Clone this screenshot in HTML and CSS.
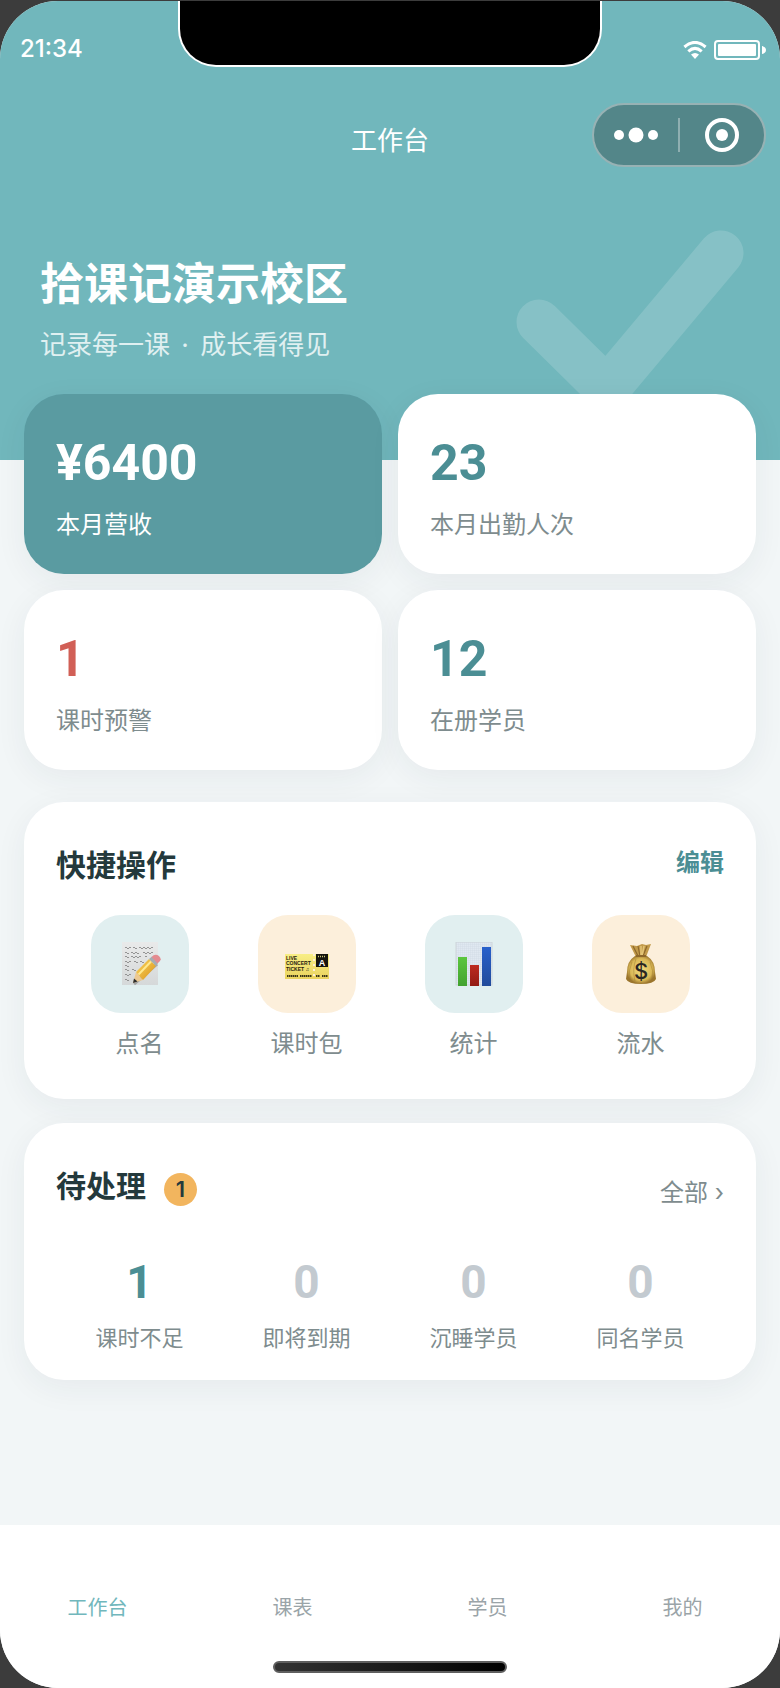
FILE: index.html
```
<!DOCTYPE html>
<html lang="zh-CN">
<head>
    <meta charset="UTF-8">
    <meta name="viewport" content="width=device-width, initial-scale=1.0">
    <title>工作台</title>
    <link rel="stylesheet" href="styles.css">
</head>
<body>
    <div class="screen">
        <header class="hero">
            <svg class="hero-check" viewBox="0 0 240 240" aria-hidden="true">
                <path d="M39 102 L107 169 L221 33" fill="none" stroke="#fff" stroke-opacity="0.15" stroke-width="45" stroke-linecap="round" stroke-linejoin="round"/>
            </svg>

            <div class="status-bar">
                <span class="time">21:34</span>
                <div class="notch"></div>
                <div class="status-icons">
                    <svg width="24" height="18" viewBox="0 0 24 18" aria-hidden="true">
                        <path d="M1.4 6 Q12 -3.2 22.6 6" fill="none" stroke="#fff" stroke-width="3"/>
                        <path d="M5.3 10.4 Q12 4.4 18.7 10.4" fill="none" stroke="#fff" stroke-width="3"/>
                        <path d="M8 13.6 Q12 10.4 16 13.6 L12 18 Z" fill="#fff"/>
                    </svg>
                    <svg width="52" height="20" viewBox="0 0 52 20" aria-hidden="true">
                        <rect x="1" y="1" width="44" height="18" rx="3" fill="none" stroke="#fff" stroke-width="2"/>
                        <rect x="4" y="4" width="38" height="12" rx="1" fill="#fff"/>
                        <path d="M48 6 Q52 7 52 10 Q52 13 48 14 Z" fill="#fff"/>
                    </svg>
                </div>
            </div>

            <div class="nav-bar">
                <div class="nav-title">工作台</div>
                <div class="capsule">
                    <button type="button" aria-label="更多">
                        <svg width="44" height="16" viewBox="0 0 44 16">
                            <circle cx="5" cy="8" r="5" fill="#fff"/>
                            <circle cx="22" cy="8" r="7.5" fill="#fff"/>
                            <circle cx="39" cy="8" r="5" fill="#fff"/>
                        </svg>
                    </button>
                    <button type="button" aria-label="关闭">
                        <svg width="34" height="34" viewBox="0 0 34 34">
                            <circle cx="17" cy="17" r="15" fill="none" stroke="#fff" stroke-width="4"/>
                            <circle cx="17" cy="17" r="6" fill="#fff"/>
                        </svg>
                    </button>
                </div>
            </div>

            <div class="hero-text">
                <h1>拾课记演示校区</h1>
                <p>记录每一课 <span class="dot">·</span> 成长看得见</p>
            </div>
        </header>

        <main>
            <!-- 数据概览 -->
            <section class="stats">
                <div class="stat primary">
                    <div class="number">¥6400</div>
                    <div class="label">本月营收</div>
                </div>
                <div class="stat">
                    <div class="number">23</div>
                    <div class="label">本月出勤人次</div>
                </div>
                <div class="stat warn">
                    <div class="number">1</div>
                    <div class="label">课时预警</div>
                </div>
                <div class="stat">
                    <div class="number">12</div>
                    <div class="label">在册学员</div>
                </div>
            </section>

            <!-- 快捷操作 -->
            <section class="card quick">
                <div class="card-head">
                    <h2>快捷操作</h2>
                    <button type="button" class="edit">编辑</button>
                </div>
                <div class="actions">
                    <button type="button" class="action">
                        <span class="icon teal">
                            <svg width="44" height="44" viewBox="0 0 44 44">
                                <defs>
                                    <linearGradient id="paper" x1="0" y1="0" x2="0" y2="1">
                                        <stop offset="0" stop-color="#e9eaea"/>
                                        <stop offset="1" stop-color="#d5d8d9"/>
                                    </linearGradient>
                                    <linearGradient id="pencil" x1="0" y1="0" x2="1" y2="1">
                                        <stop offset="0" stop-color="#fbd75c"/>
                                        <stop offset="1" stop-color="#d9921c"/>
                                    </linearGradient>
                                </defs>
                                <rect x="4" width="36" height="43" fill="url(#paper)"/>
                                <g fill="none" stroke="#8a8a8a" stroke-width="0.9">
                                    <path d="M7 6 q1 -2 2 0 t2 0 t2 0 M15 6 q1 -2 2 0 t2 0 M21 6 q1 -2 2 0 t2 0 t2 0 t2 0 t2 0 t2 0 t2 0"/>
                                    <path d="M7 11 q1 -2 2 0 t2 0 M13 11 q1 -2 2 0 t2 0 t2 0 t2 0 M25 11 q1 -2 2 0 t2 0 t2 0 t2 0 t2 0"/>
                                    <path d="M7 15 q1 -2 2 0 t2 0 M13 15 q1 -2 2 0 t2 0 t2 0 t2 0 t2 0 M27 15 q1 -2 2 0"/>
                                    <path d="M7 20 q1 -2 2 0 t2 0 t2 0 M16 20 q1 -2 2 0 t2 0 M22 20 q1 -2 2 0 t2 0"/>
                                    <path d="M7 24 q1 -2 2 0 t2 0 M7 28 q1 -2 2 0 t2 0 M14 28 q1 -2 2 0 t2 0"/>
                                    <path d="M7 33 q1 -2 2 0 t2 0 t2 0 M7 38 q1 -2 2 0 t2 0"/>
                                </g>
                                <path d="M16 42 L39 22" stroke="#000" stroke-opacity="0.25" stroke-width="3"/>
                                <path d="M15 41 L18 30 L25 38 Z" fill="#ecc993"/>
                                <path d="M15 41 L16 36.500 L19.500 39.500 Z" fill="#2d2d2d"/>
                                <path d="M18 30 L31 17 L38 24 L25 38 Z" fill="url(#pencil)"/>
                                <path d="M20.500 32.500 L33 19.500" stroke="#ffe98e" stroke-width="2"/>
                                <path d="M31 17 L34 14.500 L40 21 L38 24 Z" fill="#a5adb2"/>
                                <path d="M33.500 15 Q37 11 41 14 Q45 18 39.500 21.500 Z" fill="#e48b90"/>
                            </svg>
                        </span>
                        点名
                    </button>
                    <button type="button" class="action">
                        <span class="icon orange">
                            <svg width="44" height="44" viewBox="0 0 44 44">
                                <defs>
                                    <linearGradient id="ticket" x1="0" y1="0" x2="0" y2="1">
                                        <stop offset="0" stop-color="#f8ee85"/>
                                        <stop offset="1" stop-color="#ead35e"/>
                                    </linearGradient>
                                </defs>
                                <rect x="0" y="12" width="44" height="25" fill="url(#ticket)"/>
                                <path d="M29 12 V37" stroke="#fcefdb" stroke-width="2" stroke-dasharray="2 3"/>
                                <rect x="31" y="12" width="12" height="13" fill="#15150f"/>
                                <g class="ticket-text">
                                    <text x="1" y="18">LIVE</text>
                                    <text x="1" y="23">CONCERT</text>
                                    <text x="1" y="29">TICKET ♫</text>
                                </g>
                                <text class="ticket-zone" x="37" y="24">A</text>
                                <path d="M2 34 H13 M15 34 H27 M31 34 H35 M37 34 H43" stroke="#3b3518" stroke-width="2" stroke-dasharray="1.500 0.500"/>
                                <path d="M33 14.500 H41" stroke="#cdc77a" stroke-width="1.500" stroke-dasharray="1 1"/>
                            </svg>
                        </span>
                        课时包
                    </button>
                    <button type="button" class="action">
                        <span class="icon teal">
                            <svg width="44" height="44" viewBox="0 0 44 44">
                                <defs>
                                    <pattern id="grid" width="2" height="2" patternUnits="userSpaceOnUse">
                                        <rect width="2" height="2" fill="#e0e8f1"/>
                                        <path d="M0 0 H2 M0 0 V2" stroke="#ccd7e1" stroke-width="0.600"/>
                                    </pattern>
                                    <linearGradient id="green" x1="0" y1="0" x2="0" y2="1">
                                        <stop offset="0" stop-color="#5cc63e"/>
                                        <stop offset="1" stop-color="#43a231"/>
                                    </linearGradient>
                                    <linearGradient id="red" x1="0" y1="0" x2="0" y2="1">
                                        <stop offset="0" stop-color="#bd2a20"/>
                                        <stop offset="1" stop-color="#921b13"/>
                                    </linearGradient>
                                    <linearGradient id="blue" x1="0" y1="0" x2="0" y2="1">
                                        <stop offset="0" stop-color="#2860cb"/>
                                        <stop offset="1" stop-color="#214b9b"/>
                                    </linearGradient>
                                </defs>
                                <rect x="4" y="0" width="36" height="43" fill="url(#grid)" stroke="#cdd6da"/>
                                <rect x="6" y="15" width="9" height="29" fill="url(#green)"/>
                                <rect x="18" y="23" width="9" height="21" fill="url(#red)"/>
                                <rect x="30" y="5" width="9" height="39" fill="url(#blue)"/>
                            </svg>
                        </span>
                        统计
                    </button>
                    <button type="button" class="action">
                        <span class="icon orange">
                            <svg width="44" height="44" viewBox="0 0 44 44">
                                <defs>
                                    <radialGradient id="bag">
                                        <stop offset="0" stop-color="#f3dc80"/>
                                        <stop offset="0.750" stop-color="#d9b755"/>
                                        <stop offset="1" stop-color="#9b752c"/>
                                    </radialGradient>
                                </defs>
                                <path d="M17 15 L11 3 L18 4 L23 2 L27 3 L32 2 L27 15 Z" fill="#c29a4a"/>
                                <path d="M14 4 L19 14 M19 4 L21 14 M28 4 L24 14" stroke="#8d672a" stroke-width="1.200"/>
                                <path d="M22 4 V14 M25 4 L23 14" stroke="#e4c577" stroke-width="1.500"/>
                                <path d="M16 14 Q22 12 28 14 Q36 19 36 30 L37 37 Q35 42 22 42 Q9 42 7 37 L8 30 Q8 19 16 14 Z" fill="url(#bag)"/>
                                <path d="M13 20 Q9 28 11 38 M31 20 Q35 28 33 38 M17 17 Q13 27 16 39" fill="none" stroke="#93712a" stroke-opacity="0.400"/>
                                <path d="M17 14 H27" stroke="#8d672a" stroke-width="2"/>
                                <text class="bag-sign" x="22" y="37">$</text>
                            </svg>
                        </span>
                        流水
                    </button>
                </div>
            </section>

            <!-- 待处理 -->
            <section class="card pending">
                <div class="card-head">
                    <h2>待处理 <span class="badge">1</span></h2>
                    <a href="#" class="more">全部 ›</a>
                </div>
                <div class="todos">
                    <div class="todo active">
                        <div class="count">1</div>
                        <div class="name">课时不足</div>
                    </div>
                    <div class="todo">
                        <div class="count">0</div>
                        <div class="name">即将到期</div>
                    </div>
                    <div class="todo">
                        <div class="count">0</div>
                        <div class="name">沉睡学员</div>
                    </div>
                    <div class="todo">
                        <div class="count">0</div>
                        <div class="name">同名学员</div>
                    </div>
                </div>
            </section>
        </main>

        <footer class="tab-bar">
            <nav class="tabs">
                <a href="#" class="active">工作台</a>
                <a href="#">课表</a>
                <a href="#">学员</a>
                <a href="#">我的</a>
            </nav>
            <div class="home-indicator"></div>
        </footer>
    </div>
</body>
</html>
```
FILE: styles.css
```
/* General Styles */
* {
    box-sizing: border-box;
}

body {
    margin: 0;
    padding-top: 1px;
    min-height: 100vh;
    display: flex;
    background-color: #3c3c3c;
    font-family: Inter, "Noto Sans CJK SC", sans-serif;
    color: #7e8c8e;
}

h1, h2, p {
    margin: 0;
}

button {
    padding: 0;
    border: none;
    background: none;
    font-family: inherit;
    color: inherit;
    cursor: pointer;
}

a {
    color: inherit;
    text-decoration: none;
}

svg {
    display: block;
}

.screen {
    flex: 1;
    min-width: 0;
    display: flex;
    flex-direction: column;
    background: #f2f6f7;
    border-radius: 58px;
    overflow: hidden;
}

/* Hero */
.hero {
    position: relative;
    padding-bottom: 97px;
    background: #71b7bc;
    color: white;
    overflow: hidden;
}

.hero-check {
    position: absolute;
    right: 40px;
    bottom: 0;
    width: 240px;
    height: 240px;
    overflow: visible;
}

.status-bar {
    display: grid;
    grid-template-columns: 1fr 54.4% 1fr;
    grid-template-rows: 66px;
}

.time {
    padding: 30px 0 0 20px;
    font-size: 24px;
    line-height: 36px;
    font-weight: 500;
}

.notch {
    background: black;
    border: 2px solid white;
    border-top: none;
    border-radius: 0 0 38px 38px;
}

.status-icons {
    display: flex;
    justify-content: flex-end;
    align-items: center;
    gap: 7px;
    height: 34px;
    margin: 32px 14px 0 0;
}

.nav-bar {
    display: grid;
    grid-template-columns: 1fr auto 1fr;
    padding: 36px 14px 0;
}

.nav-title {
    grid-column: 2;
    padding-top: 20px;
    font-size: 26px;
    line-height: 36px;
}

.capsule {
    justify-self: end;
    display: flex;
    align-items: center;
    width: 174px;
    height: 64px;
    border: 2px solid #97b2b4;
    border-radius: 32px;
    background: #538689;
}

.capsule button {
    flex: 1;
    display: flex;
    justify-content: center;
    align-items: center;
    height: 34px;
}

.capsule button + button {
    border-left: 2px solid #8fafb1;
}

.hero-text {
    padding: 89px 40px 0;
}

.hero-text h1 {
    font-size: 44px;
    line-height: 56px;
    font-weight: 700;
}

.hero-text p {
    margin-top: 15px;
    font-size: 26px;
    line-height: 36px;
    color: #e0f0f1;
}

.dot {
    margin: 0 4px;
}

/* Content */
main {
    position: relative;
    margin-top: -66px;
    padding: 0 24px 24px;
}

.stats {
    display: grid;
    grid-template-columns: 1fr 1fr;
    gap: 16px;
    margin-bottom: 32px;
}

.stat, .card {
    background: white;
    border-radius: 40px;
    box-shadow: 0 8px 32px rgba(36, 57, 60, 0.06);
}

.stat {
    padding: 39px 32px 33px;
}

.stat .number {
    font-family: Roboto, sans-serif;
    font-size: 50px;
    line-height: 60px;
    font-weight: 700;
    color: #4b8e94;
}

.stat .label {
    margin-top: 16px;
    font-size: 24px;
    line-height: 32px;
}

.stat.primary {
    background: #5a9ba1;
}

.stat.primary .number,
.stat.primary .label {
    color: white;
}

.stat.warn .number {
    color: #d15f56;
}

.card {
    padding: 41px 32px 39px;
    margin-bottom: 24px;
}

.card-head {
    display: flex;
    justify-content: space-between;
    align-items: flex-start;
}

.card-head h2 {
    display: flex;
    align-items: center;
    gap: 18px;
    font-size: 30px;
    line-height: 44px;
    font-weight: 700;
    color: #24393c;
}

.edit {
    font-size: 24px;
    line-height: 40px;
    font-weight: 700;
    color: #4b8e94;
}

/* Quick actions */
.actions {
    display: grid;
    grid-template-columns: repeat(4, 1fr);
    margin-top: 28px;
}

.action {
    display: flex;
    flex-direction: column;
    align-items: center;
    gap: 15px;
    font-size: 24px;
    line-height: 32px;
}

.icon {
    display: flex;
    justify-content: center;
    align-items: center;
    width: 98px;
    height: 98px;
    border-radius: 30px;
}

.icon.teal {
    background: #e1eff0;
}

.icon.orange {
    background: #fcefdb;
}

.ticket-text {
    font: 700 5px "Liberation Sans", "DejaVu Sans", sans-serif;
    fill: #25210f;
}

.ticket-zone {
    font: 700 9px "Liberation Sans", sans-serif;
    text-anchor: middle;
    fill: white;
}

.bag-sign {
    font: 500 22px Inter, sans-serif;
    text-anchor: middle;
    fill: #2b2622;
}

/* Pending */
.pending {
    padding-bottom: 26px;
}

.pending .card-head {
    align-items: flex-end;
}

.badge {
    display: flex;
    justify-content: center;
    align-items: center;
    width: 33px;
    height: 33px;
    margin-top: 6px;
    border-radius: 50%;
    background: #f2b55e;
    font-size: 22px;
    font-weight: 600;
}

.more {
    font-size: 24px;
    line-height: 30px;
}

.todos {
    display: grid;
    grid-template-columns: repeat(4, 1fr);
    margin-top: 50px;
    text-align: center;
}

.count {
    font-family: Roboto, sans-serif;
    font-size: 46px;
    line-height: 48px;
    font-weight: 700;
    color: #c3cad0;
}

.todo.active .count {
    color: #4b8e94;
}

.name {
    margin-top: 16px;
    font-size: 22px;
    line-height: 32px;
}

/* Tab bar */
.tab-bar {
    margin-top: auto;
    padding: 68px 0 15px;
    background: white;
}

.tabs {
    display: grid;
    grid-template-columns: repeat(4, 1fr);
    text-align: center;
    font-size: 20px;
    line-height: 30px;
    color: #9aa4a8;
}

.tabs .active {
    color: #71b7bc;
}

.home-indicator {
    width: 30%;
    height: 12px;
    margin: 38px auto 0;
    border: 2px solid #5f5f5f;
    border-radius: 6px;
    background: linear-gradient(to right, #333, #000);
}
```
